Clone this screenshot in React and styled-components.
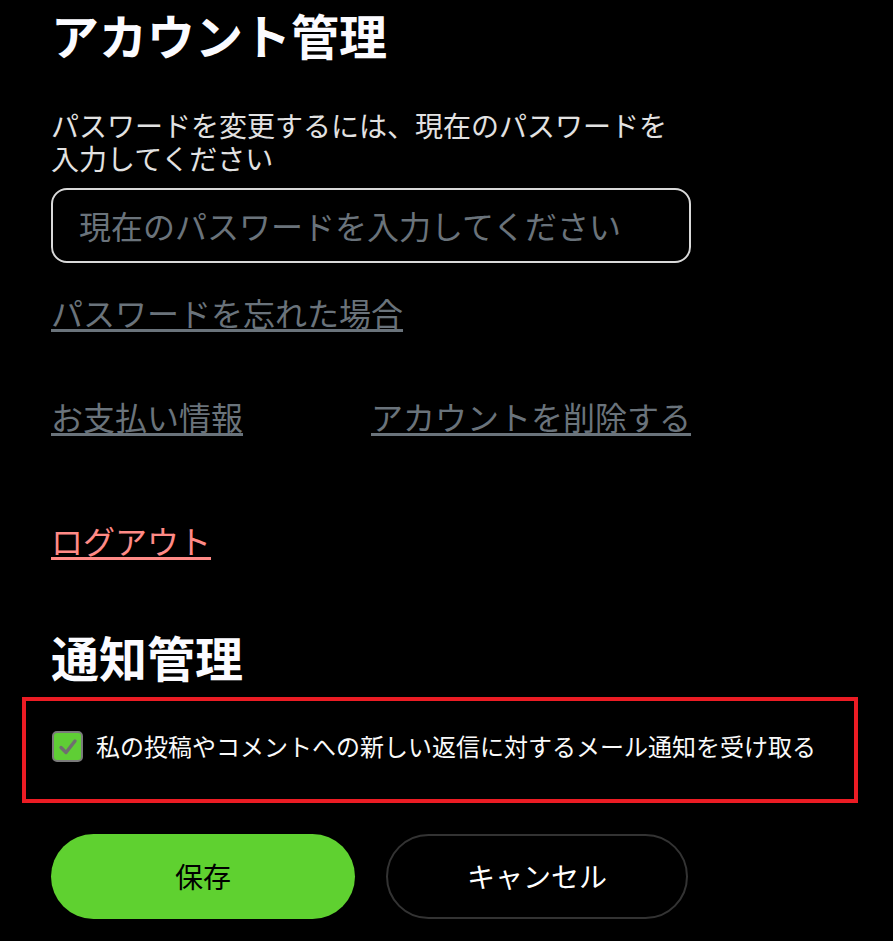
import styled, { createGlobalStyle } from 'styled-components'

const GlobalStyle = createGlobalStyle`
	html, body {
		margin: 0;
		background: #000;
	}
	body {
		font-family: "Noto Sans CJK JP", "Noto Sans", sans-serif;
		color: #e4e4e4;
	}
`

const CheckIcon = () => (
	<svg width="22" height="22" viewBox="0 0 22 22" fill="none">
		<path d="M4 11.5 L9 16.5 L18 5" stroke="#6f6f6f" strokeWidth="3.4" strokeLinecap="round" strokeLinejoin="round" />
	</svg>
)

const App = () => {
	return (
		<Page>
			<GlobalStyle />

			<Heading>アカウント管理</Heading>
			<Hint>パスワードを変更するには、現在のパスワードを入力してください</Hint>
			<PasswordInput type="password" placeholder="現在のパスワードを入力してください" />

			<ForgotLink href="#">パスワードを忘れた場合</ForgotLink>

			<LinkGrid>
				<Link href="#">お支払い情報</Link>
				<Link href="#">アカウントを削除する</Link>
			</LinkGrid>

			<LogoutLink href="#">ログアウト</LogoutLink>

			<Heading $second>通知管理</Heading>

			<Highlight>
				<CheckRow>
					<Box>
						<CheckIcon />
					</Box>
					<span>私の投稿やコメントへの新しい返信に対するメール通知を受け取る</span>
				</CheckRow>
			</Highlight>

			<Buttons>
				<SaveButton>保存</SaveButton>
				<CancelButton>キャンセル</CancelButton>
			</Buttons>
		</Page>
	)
}

export default App

const Page = styled.main`
	width: 640px;
	padding: 6px 0 22px 51px;
	display: flex;
	flex-direction: column;
	align-items: flex-start;
`

const Heading = styled.h1`
	margin: ${props => props.$second ? '69px 0 0' : '0'};
	font-size: 48px;
	line-height: 1.2;
	font-weight: 700;
	color: #fbfbff;
`

const Hint = styled.p`
	margin: 45px 0 0;
	font-size: 28px;
	line-height: 1.2;
	color: #e2e2e2;
`

const PasswordInput = styled.input`
	box-sizing: border-box;
	margin-top: 12px;
	width: 640px;
	height: 75px;
	padding: 0 26px;
	background: #000;
	border: 2px solid #d9d9d9;
	border-radius: 16px;
	font-family: inherit;
	font-size: 32px;
	color: #e4e4e4;
	outline: none;

	&::placeholder {
		color: #6a737b;
	}
`

const Link = styled.a`
	font-size: 32px;
	line-height: 1.2;
	color: #6a737b;
	text-decoration: underline;
	text-decoration-thickness: 3px;
	text-underline-offset: 3px;
`

const ForgotLink = styled(Link)`
	margin-top: 30px;
`

const LinkGrid = styled.div`
	margin-top: 66px;
	width: 640px;
	display: grid;
	grid-template-columns: 1fr 1fr;
	justify-items: start;
`

const LogoutLink = styled(Link)`
	margin-top: 85px;
	color: #ff8a86;
`

const Highlight = styled.div`
	box-sizing: border-box;
	margin: 11px 0 0 -29px;
	width: 836px;
	height: 106px;
	padding: 0 0 6px 26px;
	border: 4px solid #ec1c24;
	display: flex;
	align-items: center;
`

const CheckRow = styled.label`
	display: flex;
	align-items: center;
	gap: 13px;
	font-size: 24px;
	line-height: 1.2;
	color: #fafafa;
`

const Box = styled.span`
	box-sizing: border-box;
	width: 31px;
	height: 31px;
	border: 2px solid #7a7a7a;
	border-radius: 5px;
	background: #5fce35;
	display: flex;
	align-items: center;
	justify-content: center;
`

const Buttons = styled.div`
	margin-top: 31px;
	display: flex;
	gap: 31px;
`

const Button = styled.button`
	box-sizing: border-box;
	width: 304px;
	height: 85px;
	border-radius: 43px;
	font-family: inherit;
	font-size: 28px;
	cursor: pointer;
`

const SaveButton = styled(Button)`
	border: none;
	background: #5fd130;
	color: #000;
`

const CancelButton = styled(Button)`
	width: 302px;
	border: 2px solid #333;
	background: transparent;
	color: #fff;
`
